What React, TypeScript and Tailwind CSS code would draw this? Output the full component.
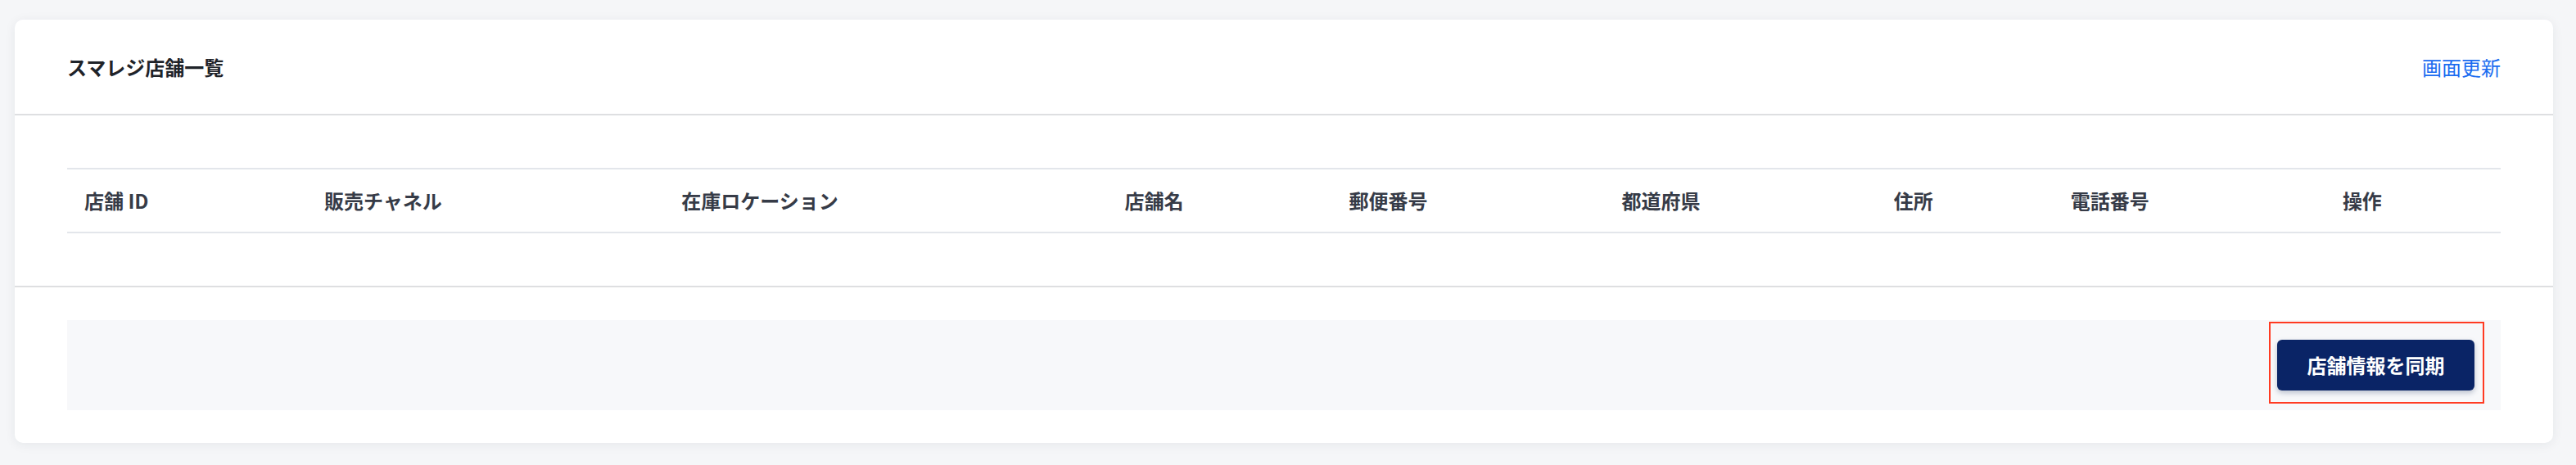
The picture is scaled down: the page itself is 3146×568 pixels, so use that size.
const columns = [
  { label: '店舗 ID', width: 'w-[293px]' },
  { label: '販売チャネル', width: 'w-[436px]' },
  { label: '在庫ロケーション', width: 'w-[541px]' },
  { label: '店舗名', width: 'w-[274px]' },
  { label: '郵便番号', width: 'w-[333px]' },
  { label: '都道府県', width: 'w-[332px]' },
  { label: '住所', width: 'w-[216px]' },
  { label: '電話番号', width: 'w-[332px]' },
  { label: '操作', width: 'w-[214px]' },
];

export default function App() {
  return (
    <main
      className="min-h-screen w-[3146px] bg-[#f5f6f8] pt-[24px] pl-[18px]"
      style={{ fontFamily: '"Noto Sans CJK JP", "Noto Sans", sans-serif' }}
    >
      <div className="w-[3100px] rounded-[10px] bg-white shadow-[0_2px_14px_rgba(30,40,60,0.07)]">
        {/* header */}
        <div className="flex h-[117px] items-center justify-between border-b-2 border-[#dedfe1] px-[64px]">
          <h1 className="text-[24px] font-bold leading-none text-[#1f2329]">スマレジ店舗一覧</h1>
          <button className="text-[24px] leading-none text-[#1a6cf0]">画面更新</button>
        </div>

        {/* table */}
        <div className="border-b-2 border-[#dedfe1] px-[64px] py-[64px]">
          <table className="w-[2972px] table-fixed border-collapse">
            <thead>
              <tr className="h-[78px] border-y-2 border-[#e3e6eb]">
                {columns.map((c) => (
                  <th
                    key={c.label}
                    className={`${c.width} px-[21px] text-left text-[24px] font-bold text-[#363b47]`}
                  >
                    {c.label}
                  </th>
                ))}
              </tr>
            </thead>
            <tbody />
          </table>
        </div>

        {/* footer */}
        <div className="px-[64px] py-[40px]">
          <div className="flex h-[110px] items-start justify-end bg-[#f7f8fa] pt-[2px] pr-[20px]">
            <div className="border-2 border-[#ff3b22] pt-[20px] pb-[14px] pl-[8px] pr-[10px]">
              <button className="flex h-[62px] w-[241px] items-center justify-center rounded-[6px] bg-[#0a2466] text-[24px] font-bold text-white shadow-[0_3px_6px_rgba(10,30,80,0.25)]">
                店舗情報を同期
              </button>
            </div>
          </div>
        </div>
      </div>
    </main>
  );
}
